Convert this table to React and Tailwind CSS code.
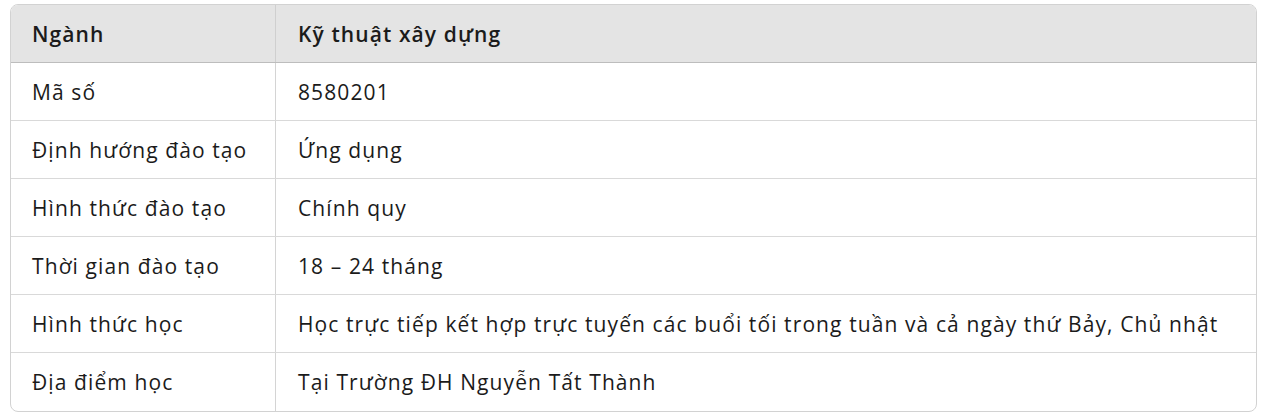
const rows = [
  ['Mã số', '8580201'],
  ['Định hướng đào tạo', 'Ứng dụng'],
  ['Hình thức đào tạo', 'Chính quy'],
  ['Thời gian đào tạo', '18 – 24 tháng'],
  ['Hình thức học', 'Học trực tiếp kết hợp trực tuyến các buổi tối trong tuần và cả ngày thứ Bảy, Chủ nhật'],
  ['Địa điểm học', 'Tại Trường ĐH Nguyễn Tất Thành'],
];

export default function App() {
  return (
    <div className="w-[1266px] h-[414px] bg-white pl-[10px] pt-[4px] font-['Open_Sans'] text-[21px] leading-[28px] tracking-[1.1px] text-[#1b1b1b]">
      <div className="w-[1247px] overflow-hidden rounded-[8px] border border-[#d2d2d2]">
        <div className="flex h-[58px] bg-[#e4e4e4] border-b border-[#bdbdbd] font-semibold">
          <div className="w-[265px] flex items-center px-[21px] border-r border-[#cfcfcf]">Ngành</div>
          <div className="flex-1 flex items-center px-[22px]">Kỹ thuật xây dựng</div>
        </div>
        {rows.map(([label, value], i) => (
          <div
            key={label}
            className={`flex h-[58px] ${i < rows.length - 1 ? 'border-b border-[#d9d9d9]' : ''}`}
          >
            <div className="w-[265px] flex items-center px-[21px] border-r border-[#d4d4d4]">{label}</div>
            <div className="flex-1 flex items-center px-[22px] whitespace-nowrap">{value}</div>
          </div>
        ))}
      </div>
    </div>
  );
}
